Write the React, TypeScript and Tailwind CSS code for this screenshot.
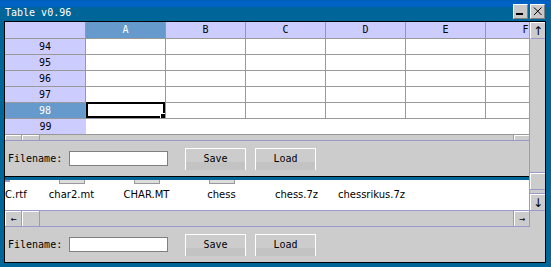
import React from 'react';

const mono = "font-['DejaVu_Sans_Mono',monospace] text-[10px] leading-[12px]";
const cols = ['A', 'B', 'C', 'D', 'E', 'F'];
const rows = [94, 95, 96, 97, 98];
const files = [
  { name: 'char2.mt', stub: true },
  { name: 'CHAR.MT', stub: true },
  { name: 'chess', stub: true },
  { name: 'chess.7z', stub: false },
  { name: 'chessrikus.7z', stub: false },
];

function TitleBar() {
  return (
    <div className="h-[21px] flex bg-[linear-gradient(to_bottom,#0058b0_0px,#0062c4_1px,#0062c4_7px,#006699_7px)]">
      <span className={`${mono} text-white pl-[5px] pt-[7px]`}>Table v0.96</span>
      <div className="ml-auto mr-[6px] mt-[4px] flex gap-[2px]">
        <button className="w-[15px] h-[15px] p-0 bg-[#c8c8c8] border border-t-white border-l-white border-r-[#808080] border-b-[#808080]">
          <svg width="13" height="13" viewBox="0 0 13 13">
            <rect x="2" y="8" width="7" height="2" fill="#000" />
          </svg>
        </button>
        <button className="w-[15px] h-[15px] p-0 bg-[#c8c8c8] border border-t-white border-l-white border-r-[#808080] border-b-[#808080]">
          <svg width="13" height="13" viewBox="0 0 13 13">
            <path d="M3 2.5 L10.5 10 M10.5 2.5 L3 10" stroke="#000" strokeWidth="1" fill="none" />
          </svg>
        </button>
      </div>
    </div>
  );
}

function Sheet() {
  return (
    <div className={`h-[113px] overflow-hidden bg-white text-black ${mono}`}>
      <div className="flex h-[17px]">
        <div className="w-[81px] shrink-0 bg-[#ccccff] border-r border-b border-[#999999]" />
        {cols.map((c) => (
          <div
            key={c}
            className={`w-[80px] shrink-0 border-r border-b border-[#999999] flex items-center justify-center ${
              c === 'A' ? 'bg-[#6699cc] text-white' : 'bg-[#ccccff]'
            }`}
          >
            {c}
          </div>
        ))}
      </div>
      {rows.map((r) => (
        <div key={r} className="flex h-[16px]">
          <div
            className={`w-[81px] shrink-0 border-r border-b border-[#999999] flex items-center justify-center ${
              r === 98 ? 'bg-[#6699cc] text-white' : 'bg-[#ccccff]'
            }`}
          >
            {r}
          </div>
          {cols.map((c) => (
            <div key={c} className="relative w-[80px] shrink-0 border-r border-b border-[#999999]">
              {r === 98 && c === 'A' && (
                <div className="absolute left-0 right-0 -top-[1px] bottom-0 border-2 border-black">
                  <div className="absolute -right-[2px] -bottom-[2px] w-[5px] h-[5px] bg-black border-l border-t border-white" />
                </div>
              )}
            </div>
          ))}
        </div>
      ))}
      <div className="flex h-[16px]">
        <div className="w-[81px] shrink-0 bg-[#ccccff] border-b border-[#999999] flex items-center justify-center">99</div>
        <div className="flex-1 border-b border-[#999999]" />
      </div>
    </div>
  );
}

function FilePanel() {
  return (
    <div className={`h-[35px] shrink-0 bg-[#cccccc] flex items-center pl-[3px] text-black ${mono}`}>
      <span className="w-[61px]">Filename:</span>
      <input
        type="text"
        defaultValue=""
        className="w-[99px] h-[15px] p-0 bg-white border border-[#808080] outline-none"
      />
      <button className="ml-[17px] w-[61px] h-[22px] p-0 border-t border-l border-r border-white bg-[linear-gradient(to_bottom,#cccccc_0px,#cccccc_13px,#c3c3c3_13px)]">
        Save
      </button>
      <button className="ml-[9px] w-[61px] h-[22px] p-0 border-t border-l border-r border-white bg-[linear-gradient(to_bottom,#cccccc_0px,#cccccc_13px,#c3c3c3_13px)]">
        Load
      </button>
    </div>
  );
}

function HScroll() {
  return (
    <div className={`h-[17px] border-y border-[#9999cc] bg-[#cccccc] flex text-black ${mono}`}>
      <div className="w-[16px] border-t border-l border-white flex items-center justify-center text-[10px]">←</div>
      <div className="w-[1px] bg-[#9999cc]" />
      <div className="w-[17px] border-t border-l border-white" />
      <div className="w-[1px] bg-[#9999cc]" />
      <div className="flex-1" />
      <div className="w-[1px] bg-[#9999cc]" />
      <div className="w-[15px] border-t border-l border-white flex items-center justify-center text-[10px]">→</div>
    </div>
  );
}

function VScroll() {
  return (
    <div className="w-[16px] flex flex-col bg-[#cccccc] text-black font-['DejaVu_Sans',sans-serif] text-[12px] leading-[12px]">
      <div className="h-[189px] border-l border-b border-[#9999cc] flex flex-col">
        <div className="h-[17px] border-t border-l border-b border-t-white border-l-white border-b-[#9999cc] flex items-center justify-center">↑</div>
        <div className="flex-1" />
        <div className="h-[1px] bg-[#9999cc]" />
        <div className="h-[16px] border-t border-l border-white" />
        <div className="h-[1px] bg-[#9999cc]" />
        <div className="h-[3px]" />
        <div className="h-[1px] bg-[#9999cc]" />
        <div className="h-[16px] border-t border-l border-white flex items-center justify-center">↓</div>
      </div>
      <div className="h-[16px] border-l border-[#9999cc]" />
    </div>
  );
}

function FileList() {
  return (
    <div className="h-[30px] bg-white flex overflow-hidden text-black font-['DejaVu_Sans',sans-serif] text-[10px] leading-[12px]">
      <div className="w-[29px] shrink-0 flex flex-col">
        <div className="h-[4px]">
          <div className="w-[5px] h-[2px] bg-[#9999cc]" />
        </div>
        <span className="mt-[5px] whitespace-nowrap">C.rtf</span>
      </div>
      {files.map((f) => (
        <div key={f.name} className="w-[75px] shrink-0 flex flex-col items-center">
          <div className="h-[4px]">
            {f.stub && <div className="w-[26px] h-[4px] bg-[#dddddd] border-x border-b border-[#999999]" />}
          </div>
          <span className="mt-[5px] whitespace-nowrap">{f.name}</span>
        </div>
      ))}
    </div>
  );
}

export default function App() {
  return (
    <div className="w-[551px] h-[267px] bg-[#006699] flex flex-col overflow-hidden">
      <TitleBar />
      <div className="ml-[4px] mr-[5px] h-[242px] border border-black flex flex-col">
        <div className="flex h-[205px]">
          <div className="w-[524px] flex flex-col">
            <Sheet />
            <div className="h-[6px] border-b border-[#9999cc] bg-[#cccccc] flex overflow-hidden">
              <div className="w-[16px] border-t border-l border-white" />
              <div className="w-[1px] bg-[#9999cc]" />
              <div className="w-[17px] border-t border-l border-white" />
              <div className="w-[1px] bg-[#9999cc]" />
              <div className="flex-1" />
              <div className="w-[1px] bg-[#9999cc]" />
              <div className="w-[15px] border-t border-l border-white" />
            </div>
            <FilePanel />
            <div className="h-[4px] border-t border-black bg-[#006699]" />
            <FileList />
            <HScroll />
          </div>
          <VScroll />
        </div>
        <FilePanel />
      </div>
    </div>
  );
}
